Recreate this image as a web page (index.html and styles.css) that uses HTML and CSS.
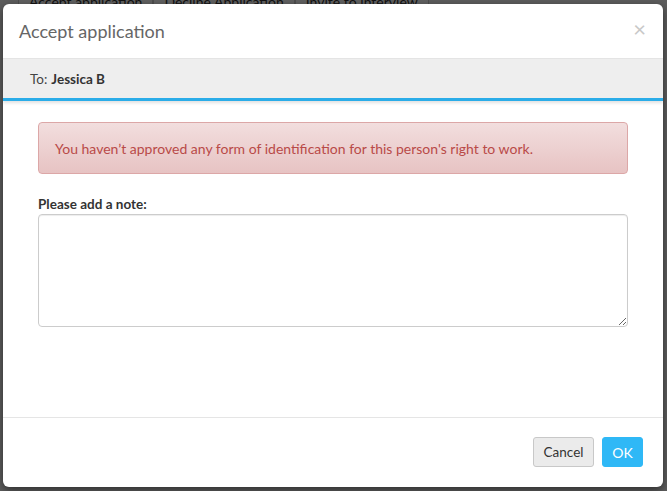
FILE: index.html
```html
<!DOCTYPE html>
<html>
<head>
<meta charset="utf-8">
<link rel="stylesheet" href="styles.css">
</head>
<body>
<div class="page">
  <div class="toolbar">
    <span class="tb-btn">Accept application</span>
    <span class="tb-btn">Decline Application</span>
    <span class="tb-btn">Invite to interview</span>
  </div>
  <div class="bottom-row">
    <span class="blk"></span><span class="blk b2"></span><span class="blk"></span><span class="blk b2"></span>
  </div>
</div>
<div class="backdrop"></div>
<div class="modal">
  <div class="modal-header">
    <h3 class="modal-title">Accept application</h3>
    <span class="close">&times;</span>
  </div>
  <div class="recipient">To: <strong>Jessica B</strong></div>
  <div class="modal-body">
    <div class="alert">You haven’t approved any form of identification for this person's right to work.</div>
    <label class="note-label">Please add a note:</label>
    <textarea class="note"></textarea>
  </div>
  <div class="modal-footer">
    <button class="btn btn-default">Cancel</button>
    <button class="btn btn-primary">OK</button>
  </div>
</div>
</body>
</html>
```
FILE: styles.css
```css
html, body {
  margin: 0;
  padding: 0;
  width: 667px;
  height: 491px;
  overflow: hidden;
  font-family: Lato, "Open Sans", sans-serif;
}
body {
  background: #f4f4f4;
  position: relative;
}
.page {
  height: 491px;
  position: relative;
}
.toolbar {
  display: flex;
  padding-left: 18px;
  margin-top: -12px;
}
.tb-btn {
  font-size: 14px;
  padding: 4px 10px;
  border: 1px solid #ccc;
  background: #fff;
  color: #333;
}
.bottom-row {
  position: absolute;
  left: 30px;
  bottom: 0;
  display: flex;
}
.blk {
  width: 130px;
  height: 20px;
  background: #222;
}
.blk.b2 { background: #333; }
.backdrop {
  position: absolute;
  inset: 0;
  background: rgba(0,0,0,0.62);
}
.modal {
  position: absolute;
  left: 3px;
  top: 4px;
  width: 660px;
  height: 483px;
  background: #fff;
  border-radius: 6px;
  display: flex;
  flex-direction: column;
  overflow: hidden;
  box-shadow: 0 3px 9px rgba(0,0,0,0.5);
}
.modal-header {
  height: 55px;
  box-sizing: border-box;
  border-bottom: 1px solid #e5e5e5;
  display: flex;
  align-items: center;
  justify-content: space-between;
  padding: 0 16px 0 16px;
}
.modal-title {
  margin: 0;
  font-size: 18px;
  font-weight: 400;
  color: #666;
  padding-bottom: 1px;
}
.close {
  font-size: 22px;
  color: #c8c8c8;
  line-height: 1;
  margin-top: -5px;
  margin-right: 1px;
}
.recipient {
  background: #eee;
  height: 42px;
  box-sizing: border-box;
  padding: 0 27px;
  display: flex;
  align-items: center;
  gap: 4px;
  font-size: 13.5px;
  color: #444;
  border-bottom: 3px solid #2aace8;
  box-shadow: 0 2px 3px rgba(0,0,0,0.12);
  position: relative;
  z-index: 1;
}
.recipient strong { font-weight: 700; color: #333; }
.modal-body {
  flex: 1;
  padding: 21px 35px 0 35px;
  display: flex;
  flex-direction: column;
}
.alert {
  height: 52px;
  box-sizing: border-box;
  border: 1px solid #dca7a7;
  border-radius: 4px;
  background: linear-gradient(#f2dede, #e7c3c3);
  color: #b94a48;
  font-size: 14px;
  display: flex;
  align-items: center;
  padding: 0 16px;
  margin-bottom: 22px;
}
.note-label {
  font-size: 13.5px;
  font-weight: 700;
  color: #333;
  margin-bottom: 2px;
}
.note {
  height: 113px;
  box-sizing: border-box;
  border: 1px solid #ccc;
  border-radius: 4px;
  resize: vertical;
  box-shadow: inset 0 1px 1px rgba(0,0,0,0.075);
  margin: 0;
}
.modal-footer {
  height: 70px;
  box-sizing: border-box;
  border-top: 1px solid #e5e5e5;
  display: flex;
  justify-content: flex-end;
  align-items: flex-start;
  gap: 8px;
  padding: 19px 20px 0 0;
}
.btn {
  height: 30px;
  font-family: Lato, "Open Sans", sans-serif;
  font-size: 14px;
  border-radius: 3px;
  padding: 0 9px;
  cursor: pointer;
}
.btn-default {
  background: #ebebeb;
  border: 1px solid #c8c8c8;
  color: #333;
  font-size: 13.5px;
  width: 61px;
}
.btn-primary {
  background: #2fb8f6;
  border: 1px solid #2fb8f6;
  color: #fff;
  width: 41px;
  padding: 0;
}
```
